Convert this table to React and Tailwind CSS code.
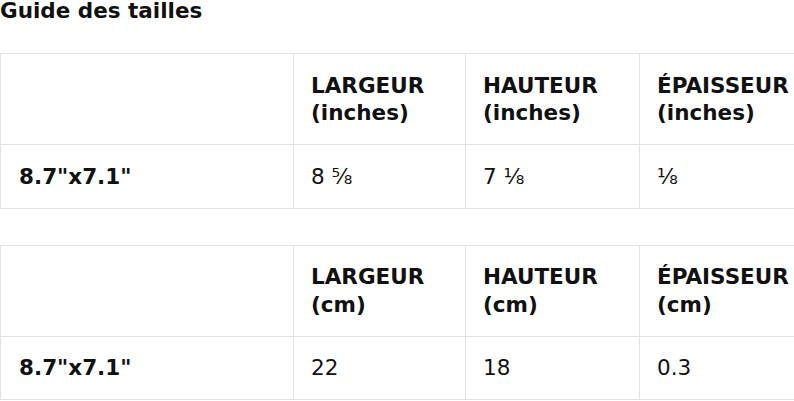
import React from "react";

const tables = [
  {
    unit: "inches",
    values: ["8 ⅝", "7 ⅛", "⅛"],
  },
  {
    unit: "cm",
    values: ["22", "18", "0.3"],
  },
];

const SizeTable = ({ unit, values }) => {
  return (
    <table className="border-collapse table-fixed w-[811px]">
      <colgroup>
        <col className="w-[293px]" />
        <col className="w-[172px]" />
        <col className="w-[174px]" />
        <col className="w-[172px]" />
      </colgroup>
      <thead>
        <tr>
          <th className="border border-[#e3e3e3] px-[17px] py-[17.5px]"></th>
          {["LARGEUR", "HAUTEUR", "ÉPAISSEUR"].map((label) => (
            <th
              key={label}
              className="border border-[#e3e3e3] px-[17px] py-[17.5px] text-left font-bold align-top whitespace-nowrap"
            >
              {label}
              <br />({unit})
            </th>
          ))}
        </tr>
      </thead>
      <tbody>
        <tr>
          <td className="border border-[#e3e3e3] px-[18px] py-[17.5px] font-bold">
            8.7"x7.1"
          </td>
          {values.map((v, i) => (
            <td key={i} className="border border-[#e3e3e3] px-[17px] py-[17.5px]">
              {v}
            </td>
          ))}
        </tr>
      </tbody>
    </table>
  );
};

export default function App() {
  return (
    <div className="w-[794px] h-[401px] overflow-hidden bg-white text-[#111] font-['DejaVu_Sans',sans-serif] text-[21.5px] leading-[27.5px]">
      <h2 className="font-bold leading-[22px] mb-[31px]">Guide des tailles</h2>
      <div className="flex flex-col gap-[36px]">
        {tables.map((t) => (
          <SizeTable key={t.unit} unit={t.unit} values={t.values} />
        ))}
      </div>
    </div>
  );
}
